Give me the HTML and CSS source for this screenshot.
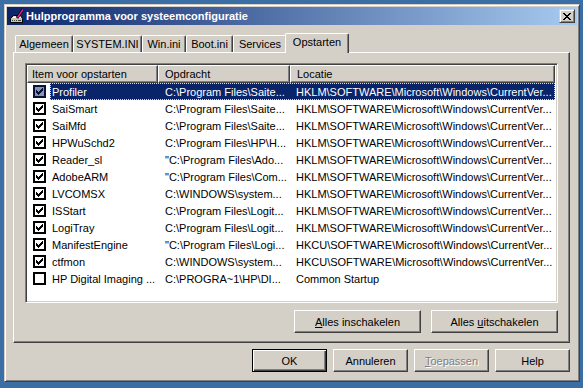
FILE: index.html
```html
<!DOCTYPE html>
<html lang="nl">

<head>
    <meta charset="UTF-8">
    <meta name="viewport" content="width=device-width, initial-scale=1.0">
    <title>Hulpprogramma voor systeemconfiguratie</title>

    <link rel="stylesheet" href="styles.css">
</head>

<body>
    <div class="venster">
        <div class="titelbalk">
            <svg class="titelicoon" viewBox="0 0 16 16">
                <polygon points="1.5,10.5 4.5,7.5 11.5,7.5 13.5,10.5 13.5,14.5 1.5,14.5" fill="#c8c4bc" stroke="#000" />
                <polygon points="3,10 5,8.5 11,8.5 12,10" fill="#fff" />
                <rect x="3" y="12" width="1" height="1" fill="#404040" />
                <rect x="5" y="12" width="1" height="1" fill="#404040" />
                <rect x="7" y="12" width="1" height="1" fill="#404040" />
                <rect x="9" y="12" width="3" height="1" fill="#404040" />
                <line x1="8" y1="10" x2="14" y2="1.5" stroke="#000" stroke-width="3" />
                <line x1="8.5" y1="9.5" x2="14" y2="1.5" stroke="#e8208c" stroke-width="1.4" />
            </svg>
            <span class="titel">Hulpprogramma voor systeemconfiguratie</span>
            <button class="sluiten" aria-label="Sluiten">
                <svg viewBox="0 0 8 7" width="8" height="7" shape-rendering="crispEdges">
                    <path d="M0 0h2v1h-2zM6 0h2v1h-2zM1 1h2v1h-2zM5 1h2v1h-2zM2 2h4v1h-4zM3 3h2v1h-2zM2 4h4v1h-4zM1 5h2v1h-2zM5 5h2v1h-2zM0 6h2v1h-2zM6 6h2v1h-2z" fill="#000" />
                </svg>
            </button>
        </div>

        <div class="inhoud">
            <nav class="tabs">
                <span class="tab t-algemeen">Algemeen</span>
                <span class="tab t-systemini">SYSTEM.INI</span>
                <span class="tab t-winini">Win.ini</span>
                <span class="tab t-bootini">Boot.ini</span>
                <span class="tab t-services">Services</span>
                <span class="tab t-opstarten valgt">Opstarten</span>
            </nav>

            <section class="paneel">
                <div class="lijst">
                    <div class="kop">
                        <span class="kol1">Item voor opstarten</span>
                        <span class="kol2">Opdracht</span>
                        <span class="kol3">Locatie</span>
                    </div>
                    <div class="rijen"></div>
                </div>

                <div class="paneelknoppen">
                    <button class="knop breed"><u>A</u>lles inschakelen</button>
                    <button class="knop breed">Alles <u>u</u>itschakelen</button>
                </div>
            </section>

            <div class="knoppen">
                <button class="knop standaard">OK</button>
                <button class="knop">Annuleren</button>
                <button class="knop uit"><u>T</u>oepassen</button>
                <button class="knop">Help</button>
            </div>
        </div>
    </div>

    <template>
        <div class="rij">
            <span class="vak">
                <span class="vakje">
                    <svg viewBox="0 0 9 9" width="9" height="9" shape-rendering="crispEdges">
                        <path d="M7 1h1v1h-1zM6 2h2v1h-2zM1 3h1v1h-1zM5 3h3v1h-3zM1 4h2v1h-2zM4 4h3v1h-3zM1 5h5v1h-5zM2 6h3v1h-3zM3 7h1v1h-1z" />
                    </svg>
                </span>
            </span>
            <span class="velden">
                <span class="naam"></span>
                <span class="opdracht"></span>
                <span class="locatie"></span>
            </span>
        </div>
    </template>

    <script>
        const rijen = document.querySelector(".rijen");
        const template = document.querySelector("template");

        const run = "HKLM\\SOFTWARE\\Microsoft\\Windows\\CurrentVer...";
        const runCu = "HKCU\\SOFTWARE\\Microsoft\\Windows\\CurrentVer...";

        // de opstartitems zoals ze in de lijst staan
        const items = [
            { naam: "Profiler", opdracht: "C:\\Program Files\\Saite...", locatie: run, aan: true },
            { naam: "SaiSmart", opdracht: "C:\\Program Files\\Saite...", locatie: run, aan: true },
            { naam: "SaiMfd", opdracht: "C:\\Program Files\\Saite...", locatie: run, aan: true },
            { naam: "HPWuSchd2", opdracht: "C:\\Program Files\\HP\\H...", locatie: run, aan: true },
            { naam: "Reader_sl", opdracht: "\"C:\\Program Files\\Ado...", locatie: run, aan: true },
            { naam: "AdobeARM", opdracht: "\"C:\\Program Files\\Com...", locatie: run, aan: true },
            { naam: "LVCOMSX", opdracht: "C:\\WINDOWS\\system...", locatie: run, aan: true },
            { naam: "ISStart", opdracht: "C:\\Program Files\\Logit...", locatie: run, aan: true },
            { naam: "LogiTray", opdracht: "C:\\Program Files\\Logit...", locatie: run, aan: true },
            { naam: "ManifestEngine", opdracht: "\"C:\\Program Files\\Logi...", locatie: runCu, aan: true },
            { naam: "ctfmon", opdracht: "C:\\WINDOWS\\system...", locatie: runCu, aan: true },
            { naam: "HP Digital Imaging ...", opdracht: "C:\\PROGRA~1\\HP\\DI...", locatie: "Common Startup", aan: false }
        ];

        items.forEach((item, i) => {
            const klon = template.content.cloneNode(true);
            const rij = klon.querySelector(".rij");

            klon.querySelector(".naam").textContent = item.naam;
            klon.querySelector(".opdracht").textContent = item.opdracht;
            klon.querySelector(".locatie").textContent = item.locatie;

            if (!item.aan) {
                klon.querySelector(".vakje").classList.add("leeg");
            }
            // eerste rij is geselecteerd
            if (i == 0) {
                rij.classList.add("valgt");
            }
            rijen.appendChild(klon);
        });
    </script>
</body>

</html>
```

FILE: styles.css
```css
body {
    margin: 0;
    background-color: #3a6ea5;
    font-family: "Liberation Sans", Arial, sans-serif;
    font-size: 11px;
    color: #000;
}

.venster {
    box-sizing: border-box;
    width: 576px;
    height: 378px;
    margin: 4px 0 0 4px;
    padding: 2px;
    display: flex;
    flex-direction: column;
    background-color: #d4d0c8;
    border: 1px solid;
    border-color: #d4d0c8 #404040 #404040 #d4d0c8;
    box-shadow: inset 1px 1px #fff, inset -1px -1px #808080;
}

/* titelbalk */

.titelbalk {
    height: 18px;
    flex-shrink: 0;
    display: flex;
    align-items: center;
    padding: 0 2px;
    background: linear-gradient(to right, #0a246a, #a6caf0);
    color: #fff;
}

.titelicoon {
    width: 16px;
    height: 16px;
    margin-right: 1px;
}

.titel {
    flex: 1;
    font-weight: bold;
    white-space: nowrap;
}

.sluiten {
    box-sizing: border-box;
    width: 16px;
    height: 14px;
    padding: 0;
    display: flex;
    align-items: center;
    justify-content: center;
    background-color: #d4d0c8;
    border: 1px solid;
    border-color: #d4d0c8 #404040 #404040 #d4d0c8;
    box-shadow: inset 1px 1px #fff, inset -1px -1px #808080;
}

/* inhoud */

.inhoud {
    flex: 1;
    display: flex;
    flex-direction: column;
    padding: 8px 7px 7px 6px;
}

.tabs {
    height: 19px;
    display: flex;
    align-items: flex-end;
    padding-left: 2px;
}

.tab {
    box-sizing: border-box;
    height: 17px;
    display: flex;
    align-items: center;
    justify-content: center;
    white-space: nowrap;
    border-top: 1px solid #fff;
    border-left: 1px solid #fff;
    border-right: 1px solid #404040;
    border-radius: 2px 2px 0 0;
    box-shadow: inset -1px 0 #808080;
}

.t-algemeen {
    width: 58px;
}

.t-systemini {
    width: 69px;
}

.t-winini {
    width: 44px;
}

.t-bootini {
    width: 47px;
}

.t-services {
    width: 54px;
}

.t-opstarten {
    width: 64px;
}

.tab.valgt {
    position: relative;
    z-index: 1;
    height: 20px;
    margin: 0 -2px -1px;
    padding-bottom: 3px;
    background-color: #d4d0c8;
}

.paneel {
    box-sizing: border-box;
    height: 291px;
    display: flex;
    flex-direction: column;
    gap: 7px;
    padding: 10px 11px 9px 11px;
    border: 1px solid;
    border-color: #fff #404040 #404040 #fff;
    box-shadow: inset -1px -1px #808080;
}

/* lijst met opstartitems */

.lijst {
    box-sizing: border-box;
    height: 240px;
    padding: 1px;
    overflow: hidden;
    background-color: #fff;
    border: 1px solid;
    border-color: #808080 #fff #fff #808080;
    box-shadow: inset 1px 1px #404040, inset -1px -1px #d4d0c8;
}

.kop {
    height: 18px;
    display: flex;
}

.kop span {
    box-sizing: border-box;
    display: flex;
    align-items: center;
    padding-left: 6px;
    white-space: nowrap;
    background-color: #d4d0c8;
    border: 1px solid;
    border-color: #fff #404040 #404040 #fff;
    box-shadow: inset -1px -1px #808080;
}

.kop .kol1 {
    width: 131px;
    padding-left: 4px;
}

.kop .kol2 {
    width: 132px;
}

.kop .kol3 {
    width: 265px;
}

.rij {
    height: 17px;
    display: flex;
}

.vak {
    box-sizing: border-box;
    width: 23px;
    display: flex;
    align-items: center;
    padding-left: 6px;
}

.vakje {
    box-sizing: border-box;
    width: 13px;
    height: 13px;
    display: flex;
    border: 2px solid #000;
    background-color: #fff;
    fill: #000;
}

.vakje.leeg svg {
    visibility: hidden;
}

.velden {
    display: flex;
}

.velden span {
    box-sizing: border-box;
    display: flex;
    align-items: center;
    white-space: nowrap;
    overflow: hidden;
}

.naam {
    width: 108px;
    padding-left: 2px;
}

.opdracht {
    width: 132px;
    padding-left: 7px;
}

.locatie {
    width: 265px;
    padding-left: 6px;
}

.rij.valgt .velden {
    background-color: #0a246a;
    color: #fff;
    outline: 1px dotted #f5db95;
    outline-offset: -1px;
}

.rij.valgt .vakje {
    border-color: #05123a;
    background-color: #8a92b2;
    fill: #05123a;
}

/* knoppen */

.paneelknoppen {
    display: flex;
    justify-content: flex-end;
    gap: 10px;
}

.knoppen {
    display: flex;
    justify-content: flex-end;
    gap: 6px;
    margin-top: 6px;
}

.knop {
    box-sizing: border-box;
    width: 75px;
    height: 23px;
    padding: 0;
    font: inherit;
    color: #000;
    background-color: #d4d0c8;
    border: 1px solid;
    border-color: #fff #404040 #404040 #fff;
    box-shadow: inset -1px -1px #808080;
}

.knop.breed {
    width: 127px;
}

.knop.standaard {
    border-color: #000;
    box-shadow: inset 1px 1px #fff, inset -1px -1px #404040, inset -2px -2px #808080;
}

.knop.uit {
    color: #808080;
    text-shadow: 1px 1px #fff;
}
```
